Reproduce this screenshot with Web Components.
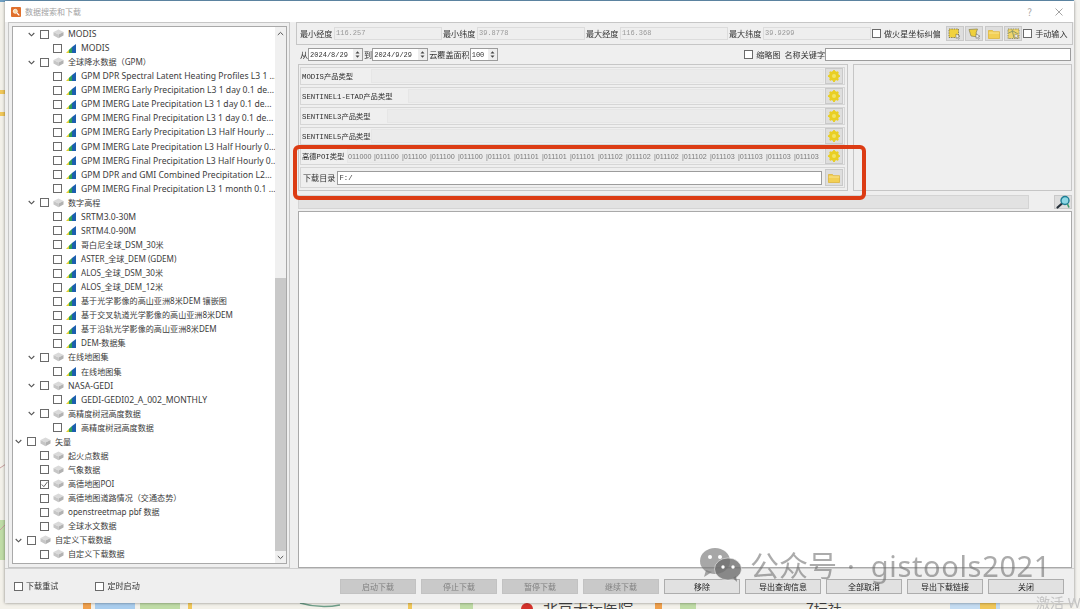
<!DOCTYPE html>
<html lang="zh">
<head>
<meta charset="utf-8">
<title>数据搜索和下载</title>
<style>
    html, body { margin: 0; padding: 0; width: 1080px; height: 609px; overflow: hidden; background: #f1f0ea; }
    body { font-family: "Noto Sans", "Noto Sans CJK SC", sans-serif; }
</style>
</head>
<body>
<map-backdrop></map-backdrop>
<search-window></search-window>
<annotation-layer></annotation-layer>

<script>
const CUBE = `<svg width="11" height="10" viewBox="0 0 11 10"><path d="M5.5 0.5 10.5 3 5.5 5.5 .5 3Z" fill="#dadada"/><path d="M.5 3v3.5l5 2.8V5.5Z" fill="#c6c6c6"/><path d="M10.5 3v3.5l-5 2.8V5.5Z" fill="#b2b2b2"/></svg>`;
const RASTER = `<svg width="10" height="9" viewBox="0 0 10 9"><path d="M0 9 3 5.800V9Z" fill="#e3cf2e"/><path d="M3 9V5.800L6 3V9Z" fill="#2f9e58"/><path d="M6 9V3L10 0V9Z" fill="#1c5fae"/></svg>`;
const GEAR = `<svg width="14" height="14" viewBox="0 0 14 14"><g fill="#e9cf24"><circle cx="7" cy="7" r="5"/><rect x="6" y="1" width="2" height="12" rx=".6"/><rect x="6" y="1" width="2" height="12" rx=".6" transform="rotate(45 7 7)"/><rect x="6" y="1" width="2" height="12" rx=".6" transform="rotate(90 7 7)"/><rect x="6" y="1" width="2" height="12" rx=".6" transform="rotate(135 7 7)"/></g><circle cx="7" cy="7" r="2" fill="#f3e462"/></svg>`;
const FOLDER = `<svg width="12" height="10" viewBox="0 0 12 10"><path d="M.5 1.500h4l1 1.200h6V9.500H.5Z" fill="#f2cf55" stroke="#dcb02e" stroke-width=".7"/><path d="M.8 4h10.400" stroke="#f9e591" stroke-width="1"/></svg>`;
const SEARCH = `<svg width="15" height="14" viewBox="0 0 15 14"><path d="M6 8.500 1.500 12.500" stroke="#26303a" stroke-width="2.200" stroke-linecap="round"/><circle cx="9" cy="5.500" r="4" fill="#8fd8e4" stroke="#1f7f96" stroke-width="1.400"/><path d="M11.500 9 13 12.500" stroke="#3b9c6a" stroke-width="1.600"/></svg>`;
const SELECT_BOX = `<svg width="13" height="12" viewBox="0 0 13 12"><rect x="1" y="1" width="9.500" height="8.500" fill="#f1d23f" stroke="#6e6a4a" stroke-width=".8" stroke-dasharray="1.400 1"/><path d="M8 6l4 2.200-1.700.6 1 1.800-1 .6-1-1.800-1.200 1Z" fill="#fff" stroke="#555" stroke-width=".5"/></svg>`;
const SELECT_POLY = `<svg width="13" height="12" viewBox="0 0 13 12"><path d="M1 1.500 9.500 1 8 5 10 9 3 8Z" fill="#efd03c" stroke="#8a8350" stroke-width=".7"/><path d="M8 6l4 2.200-1.700.6 1 1.800-1 .6-1-1.800-1.200 1Z" fill="#fff" stroke="#555" stroke-width=".5"/></svg>`;
const SELECT_MAP = `<svg width="13" height="12" viewBox="0 0 13 12"><rect x="1" y="1" width="11" height="9.500" fill="#efd56a" stroke="#7a7a5a" stroke-width=".8" stroke-dasharray="1.400 1"/><path d="M1.500 5 6 3l5 3M5 1.500 7 10" stroke="#8d9b6b" stroke-width="1" fill="none"/><path d="M8 6l3.600 2-1.500.5.9 1.600-.9.5-.9-1.600-1.100.9Z" fill="#fff" stroke="#555" stroke-width=".4"/></svg>`;

class MapBackdrop extends HTMLElement {
    constructor() {
        super();
        this.attachShadow({ mode: 'open' });
        this.shadowRoot.innerHTML = `
            <style>
                :host { position: absolute; inset: 0; display: block; }
                svg { display: block; }
                text { font-family: "Noto Sans CJK SC", sans-serif; }
            </style>
            <svg width="1080" height="609" viewBox="0 0 1080 609">
                <rect width="1080" height="609" fill="#f3f1ea"/>
                <rect width="1080" height="2" fill="#6f9fc2"/>
                <rect x="0" y="90" width="6" height="4" fill="#f0c75a"/>
                <rect x="0" y="112" width="6" height="4" fill="#f0c75a"/>
                <rect x="0" y="520" width="6" height="40" fill="#bfdca6"/>
                <path d="M0 468 6 464M0 530 6 524" stroke="#c9a0a0" stroke-width="1"/>
                <rect x="1074" y="0" width="6" height="609" fill="#f4f3ef"/>
                <rect x="83" y="603" width="8" height="6" fill="#f0a04c"/>
                <rect x="95" y="603" width="40" height="6" fill="#a9cdee"/>
                <rect x="140" y="603" width="40" height="6" fill="#bfdca6"/>
                <rect x="188" y="603" width="4" height="6" fill="#f0c75a"/>
                <path d="M300 603q20 6 40 2" stroke="#6f9f8a" stroke-width="1.500" fill="none"/>
                <rect x="408" y="603" width="4" height="6" fill="#f0c75a"/>
                <rect x="460" y="603" width="13" height="6" fill="#bfdca6"/>
                <circle cx="527" cy="609" r="6" fill="#d4322c"/>
                <text x="543" y="614" font-size="15" fill="#444">北京天坛医院</text>
                <rect x="655" y="603" width="7" height="6" fill="#f0a04c"/>
                <rect x="680" y="603" width="16" height="6" fill="#bfdca6"/>
                <text x="806" y="614" font-size="14" fill="#444">7坛社</text>
                <rect x="950" y="603" width="50" height="6" fill="#c4dcf2"/>
                <rect x="980" y="603" width="16" height="6" fill="#f0c75a"/>
            </svg>
        `;
    }
}

class CheckBox extends HTMLElement {
    constructor() {
        super();
        this.attachShadow({ mode: 'open' });
        this.shadowRoot.innerHTML = `
            <style>
                :host { display: inline-flex; align-items: center; gap: 3px; color: #333; font: 8.100px/12px "Noto Sans CJK SC", sans-serif; white-space: nowrap; }
                .box { width: 7px; height: 7px; border: 1px solid #6a6a6a; background: #fff; display: block; flex: none; }
                svg { display: block; }
            </style>
            <span class="box">${this.hasAttribute('checked') ? '<svg width="7" height="7" viewBox="0 0 7 7"><path d="M.8 3.500l2 2.200L6.500.8" stroke="#666" stroke-width="1" fill="none"/></svg>' : ''}</span><slot></slot>
        `;
    }
}

class PushButton extends HTMLElement {
    constructor() {
        super();
        this.attachShadow({ mode: 'open' });
        this.shadowRoot.innerHTML = `
            <style>
                :host { display: flex; align-items: center; justify-content: center; height: 13px; background: #e1e1e1; border: 1px solid #adadad; color: #222; font: 8px "Noto Sans CJK SC", sans-serif; }
                :host([disabled]) { background: #c9c9c9; border-color: #c2c2c2; color: #808080; }
            </style>
            <slot></slot>
        `;
    }
}

class ToolButton extends HTMLElement {
    constructor() {
        super();
        this.attachShadow({ mode: 'open' });
        const icons = { gear: GEAR, folder: FOLDER, search: SEARCH, box: SELECT_BOX, poly: SELECT_POLY, map: SELECT_MAP };
        this.shadowRoot.innerHTML = `
            <style>
                :host { display: flex; align-items: center; justify-content: center; width: 16px; height: 15px; flex: none; background: #dedede; border: 1px solid #c9c9c9; }
                svg { display: block; }
            </style>
            ${icons[this.getAttribute('icon')] || ''}
        `;
    }
}

class TreeView extends HTMLElement {
    constructor() {
        super();
        this.attachShadow({ mode: 'open' });
    }

    connectedCallback() {
        this.render();
    }

    get rows() {
        const r = (t) => [2, t, 'raster'];
        return [
            [1, 'MODIS', 'cube', true], r('MODIS'),
            [1, '全球降水数据（GPM）', 'cube', true],
            r('GPM DPR Spectral Latent Heating Profiles L3 1 ...'),
            r('GPM IMERG Early Precipitation L3 1 day 0.1 de...'),
            r('GPM IMERG Late Precipitation L3 1 day 0.1 de...'),
            r('GPM IMERG Final Precipitation L3 1 day 0.1 de...'),
            r('GPM IMERG Early Precipitation L3 Half Hourly ...'),
            r('GPM IMERG Late Precipitation L3 Half Hourly 0...'),
            r('GPM IMERG Final Precipitation L3 Half Hourly 0...'),
            r('GPM DPR and GMI Combined Precipitation L2...'),
            r('GPM IMERG Final Precipitation L3 1 month 0.1 ...'),
            [1, '数字高程', 'cube', true],
            r('SRTM3.0-30M'), r('SRTM4.0-90M'), r('哥白尼全球_DSM_30米'),
            r('ASTER_全球_DEM (GDEM)'), r('ALOS_全球_DSM_30米'), r('ALOS_全球_DEM_12米'),
            r('基于光学影像的高山亚洲8米DEM 镶嵌图'),
            r('基于交叉轨道光学影像的高山亚洲8米DEM'),
            r('基于沿轨光学影像的高山亚洲8米DEM'),
            r('DEM-数据集'),
            [1, '在线地图集', 'cube', true], r('在线地图集'),
            [1, 'NASA-GEDI', 'cube', true], r('GEDI-GEDI02_A_002_MONTHLY'),
            [1, '高精度树冠高度数据', 'cube', true], r('高精度树冠高度数据'),
            [0, '矢量', 'cube', true],
            [1, '起火点数据', 'cube'], [1, '气象数据', 'cube'],
            [1, '高德地图POI', 'cube', false, true],
            [1, '高德地图道路情况（交通态势）', 'cube'],
            [1, 'openstreetmap pbf 数据', 'cube'],
            [1, '全球水文数据', 'cube'],
            [0, '自定义下载数据', 'cube', true],
            [1, '自定义下载数据', 'cube'],
        ];
    }

    render() {
        this.shadowRoot.innerHTML = `
            <style>
                :host { display: flex; height: 100%; background: #fff; border: 1px solid #a9a9a9; box-sizing: border-box; overflow: hidden; }
                .list { flex: 1; min-width: 0; }
                .row { height: 14.070px; display: flex; align-items: center; color: #3c3c3c; font: 8.600px/14px "Noto Sans", "Noto Sans CJK SC", sans-serif; white-space: nowrap; }
                .row.cjk { font-size: 8.100px; }
                .chev { width: 12px; padding-left: 1px; flex: none; display: flex; }
                .row check-box { margin-right: 4px; }
                .ico { width: 10px; margin-right: 5px; flex: none; display: flex; align-items: center; justify-content: center; }
                svg { display: block; flex: none; }
                .bar { width: 11px; flex: none; display: flex; flex-direction: column; align-items: center; background: #f0f0f0; }
                .arrow { height: 12px; display: flex; align-items: center; }
                .gap { height: 239px; }
                .thumb { flex: 1; width: 100%; background: #c9c9c9; }
            </style>
            <div class="list">
                ${this.rows.map(([lvl, text, icon, open, checked]) => `
                    <div class="row ${/[\u4e00-\u9fff]/.test(text) ? 'cjk' : ''}" style="padding-left:${1 + 13 * lvl}px">
                        <span class="chev">${open ? '<svg width="7" height="5" viewBox="0 0 7 5"><path d="M.7 1l2.800 2.800L6.300 1" stroke="#555" stroke-width="1.100" fill="none"/></svg>' : ''}</span>
                        <check-box ${checked ? 'checked' : ''}></check-box>
                        <span class="ico">${icon === 'raster' ? RASTER : CUBE}</span>
                        <span>${text}</span>
                    </div>
                `).join('')}
            </div>
            <div class="bar">
                <div class="arrow"><svg width="7" height="5" viewBox="0 0 7 5"><path d="M.8 4l2.700-2.600L6.200 4" stroke="#555" stroke-width="1" fill="none"/></svg></div>
                <div class="gap"></div>
                <div class="thumb"></div>
                <div class="arrow"><svg width="7" height="5" viewBox="0 0 7 5"><path d="M.8 1l2.700 2.600L6.200 1" stroke="#555" stroke-width="1" fill="none"/></svg></div>
            </div>
        `;
    }
}

class ProductRow extends HTMLElement {
    constructor() {
        super();
        this.attachShadow({ mode: 'open' });
        const lead = this.getAttribute('lead') || '0';
        this.shadowRoot.innerHTML = `
            <style>
                :host { display: flex; align-items: center; height: 18px; padding: 0 1px; border: 1px solid #d6d6d6; box-sizing: border-box; font: 7.300px "Liberation Mono", "Noto Sans CJK SC", monospace; color: #2c2c2c; }
                .name { width: ${lead}px; flex: none; white-space: nowrap; }
                .val { flex: 1; height: 14px; min-width: 0; background: #ebebeb; border: 1px solid #e6e6e6; box-sizing: border-box; display: flex; align-items: center; overflow: hidden; white-space: nowrap; }
                tool-button { margin-left: 1px; height: 14px; }
            </style>
            <span class="name"><slot></slot></span>
            <span class="val"><slot name="values"></slot></span>
            <tool-button icon="gear"></tool-button>
        `;
    }
}

class SearchPanel extends HTMLElement {
    constructor() {
        super();
        this.attachShadow({ mode: 'open' });
        const ranges = [['最小经度', '116.257'], ['最小纬度', '39.8778'], ['最大经度', '116.368'], ['最大纬度', '39.9299']];
        const poi = ['011000', '011100', '011100', '011100', '011100', '011101', '011101', '011101', '011101', '011102', '011102', '011102', '011102', '011103', '011103', '011103', '011103'];
        const spin = `<span class="spin"><svg width="7" height="9" viewBox="0 0 7 9"><path d="M1.500 3.500h4L3.500 1.200ZM1.500 5.500h4L3.500 7.800Z" fill="#444"/></svg></span>`;
        this.shadowRoot.innerHTML = `
            <style>
                :host { display: flex; flex-direction: column; width: 777px; height: 546px; flex: none; font: 8.100px "Liberation Mono", "Noto Sans CJK SC", monospace; color: #333; }
                .coords { height: 23px; box-sizing: border-box; display: flex; align-items: center; padding-left: 3px; border: 1px solid #c6c6c6; flex: none; }
                .coords .lab { flex: none; width: 34px; white-space: nowrap; }
                .coords .num { width: 108px; height: 13px; margin-right: 1px; flex: none; box-sizing: border-box; border: 1px solid #dcdcdc; background: #eee; color: #999; font: 7px/11px "Liberation Mono", monospace; padding-left: 1px; }
                .tools { display: flex; gap: 1.500px; margin: 0 1px 0 5px; }
                .tools tool-button { height: 13px; }
                .dates { height: 19px; display: flex; align-items: center; padding-left: 4px; flex: none; }
                .spinbox { height: 13px; flex: none; box-sizing: border-box; border: 1px solid #9c9c9c; background: #fff; display: flex; align-items: center; justify-content: space-between; font: 7px "Liberation Mono", monospace; padding-left: 1px; }
                .spin { width: 9px; height: 11px; background: #eee; display: flex; align-items: center; justify-content: center; flex: none; }
                svg { display: block; }
                .grow { flex: 1; }
                .key { width: 246px; height: 13px; box-sizing: border-box; border: 1px solid #9c9c9c; background: #fff; flex: none; margin-right: 2px; }
                .middle { height: 127px; flex: none; display: flex; gap: 5px; padding-left: 2px; }
                .products { width: 550px; box-sizing: border-box; padding: 2px 2px 2px 1px; border: 1px solid #c6c6c6; display: flex; flex-direction: column; gap: 2px; }
                .side { flex: 1; margin-right: 1px; border: 1px solid #c6c6c6; background: #efefef; }
                product-row { flex: none; }
                .dir { height: 21px; box-sizing: border-box; border: 1px solid #d6d6d6; display: flex; align-items: center; padding: 0 1px 0 2px; font-family: "Noto Sans CJK SC", sans-serif; flex: none; }
                .dir .input { flex: 1; height: 14px; margin: 0 3px 0 2px; box-sizing: border-box; border: 1px solid #9c9c9c; background: #fff; font: 7.300px/12px "Liberation Mono", monospace; padding-left: 1px; }
                .poi { display: inline-block; width: 28px; font: 7.200px "Liberation Sans", sans-serif; color: #7a7a7a; }
                .poi:first-child { width: 26px; }
                .search { height: 17px; flex: none; display: flex; align-items: center; padding: 2px 0 0 2px; }
                .search .fill { width: 731px; height: 14px; background: #e2e2e2; border: 1px solid #d4d4d4; box-sizing: border-box; }
                .search tool-button { margin-left: 25px; height: 12px; }
                .results { flex: 1; margin: 1px 1px 0 2px; background: #fff; border: 1px solid #a9a9a9; }
            </style>
            <div class="coords">
                ${ranges.map(([l, v]) => `<span class="lab">${l}</span><span class="num">${v}</span>`).join('')}
                <check-box>做火星坐标纠偏</check-box>
                <div class="tools">
                    <tool-button icon="box"></tool-button><tool-button icon="poly"></tool-button><tool-button icon="folder"></tool-button><tool-button icon="map"></tool-button>
                </div>
                <check-box>手动输入</check-box>
            </div>
            <div class="dates">
                <span>从</span><span class="spinbox" style="width:55px">2024/8/29${spin}</span>
                <span style="margin:0 0 0 1px">到</span><span class="spinbox" style="width:56px">2024/9/29${spin}</span>
                <span style="margin-left:1px">云覆盖面积</span><span class="spinbox" style="width:28px">100${spin}</span>
                <span class="grow"></span>
                <check-box style="margin-right:4px">缩略图</check-box>
                <span>名称关键字</span><span class="key"></span>
            </div>
            <div class="middle">
                <div class="products">
                    <product-row lead="69">MODIS产品类型</product-row>
                    <product-row lead="106">SENTINEL1-ETAD产品类型</product-row>
                    <product-row lead="85">SENTINEL3产品类型</product-row>
                    <product-row lead="69">SENTINEL5产品类型</product-row>
                    <product-row lead="45">高德POI类型
                        <span slot="values">${poi.map((c, i) => `<span class="poi">${i ? '|' : ''}${c}</span>`).join('')}</span>
                    </product-row>
                    <div class="dir">下载目录<span class="input">F:/</span><tool-button icon="folder"></tool-button></div>
                </div>
                <div class="side"></div>
            </div>
            <div class="search"><span class="fill"></span><tool-button icon="search"></tool-button></div>
            <div class="results"></div>
        `;
    }
}

class SearchWindow extends HTMLElement {
    constructor() {
        super();
        this.attachShadow({ mode: 'open' });
        const disabled = ['启动下载', '停止下载', '暂停下载', '继续下载'];
        const enabled = ['移除', '导出查询信息', '全部取消', '导出下载链接', '关闭'];
        this.shadowRoot.innerHTML = `
            <style>
                :host { position: absolute; left: 5px; top: 1px; width: 1069px; height: 602px; display: flex; flex-direction: column; background: #efefef; box-shadow: 0 0 3px rgba(0,0,0,.45); font-family: "Noto Sans CJK SC", sans-serif; filter: blur(.3px); }
                .title { height: 21px; flex: none; background: #fff; display: flex; align-items: center; padding-left: 6px; color: #a2a2a2; font-size: 8px; gap: 4px; }
                .logo { width: 10px; height: 10px; background: #e0702c; border-radius: 1px; display: flex; align-items: center; justify-content: center; }
                .grow { flex: 1; }
                .help { color: #aaa; width: 41px; text-align: center; font-size: 10px; }
                .close { width: 19px; padding-left: 1px; height: 21px; display: flex; align-items: center; }
                svg { display: block; }
                .main { height: 546px; flex: none; display: flex; gap: 6px; padding-left: 3px; }
                .tree { width: 282px; flex: none; box-sizing: border-box; padding: 3px 2px 3px 3px; border: 1px solid #c6c6c6; }
                .foot { flex: 1; display: flex; align-items: center; padding: 0 10px 0 9px; border-top: 1px solid #cfcfcf; }
                .foot check-box:nth-child(2) { margin-left: 37px; }
                .foot .btns { margin-left: auto; display: grid; grid-template-columns: repeat(9, 76px); gap: 5px; }
            </style>
            <div class="title">
                <span class="logo"><svg width="8" height="8" viewBox="0 0 8 8"><circle cx="3.300" cy="3.300" r="2" fill="#f6d9a5" stroke="#fff" stroke-width=".8"/><path d="M5 5l2.300 2.300" stroke="#fff" stroke-width="1.200"/></svg></span>
                <span>数据搜索和下载</span><span class="grow"></span>
                <span class="help">?</span>
                <span class="close"><svg width="8" height="8" viewBox="0 0 8 8"><path d="M.5.5l7 7M7.500.5l-7 7" stroke="#9a9a9a" stroke-width=".9"/></svg></span>
            </div>
            <div class="main">
                <div class="tree"><tree-view></tree-view></div>
                <search-panel></search-panel>
            </div>
            <div class="foot">
                <check-box>下载重试</check-box>
                <check-box>定时启动</check-box>
                <div class="btns">
                    ${disabled.map(t => `<push-button disabled>${t}</push-button>`).join('')}
                    ${enabled.map(t => `<push-button>${t}</push-button>`).join('')}
                </div>
            </div>
        `;
    }
}

class AnnotationLayer extends HTMLElement {
    constructor() {
        super();
        this.attachShadow({ mode: 'open' });
        this.shadowRoot.innerHTML = `
            <style>
                :host { position: absolute; inset: 0; display: block; pointer-events: none; font-family: "Noto Sans", "Noto Sans CJK SC", sans-serif; }
                .mark { position: absolute; left: 293px; top: 145px; width: 565px; height: 47px; border: 4px solid #dc3c14; border-radius: 6px; }
                .wx { position: absolute; left: 699px; top: 547px; }
                .name { position: absolute; left: 750px; top: 546px; height: 40px; line-height: 40px; color: rgba(105,105,105,.56); white-space: nowrap; }
                .name b { font-weight: 400; font-size: 29px; }
                .name i { font-style: normal; font-size: 29px; margin: 0 16px 0 10px; }
                .name span { font-size: 29px; letter-spacing: .65px; }
                .act { position: absolute; left: 1036px; top: 595px; font-size: 14px; line-height: 16px; color: #c4c4c4; white-space: nowrap; }
            </style>
            <div class="mark"></div>
            <svg class="wx" width="44" height="36" viewBox="0 0 44 36">
                <g fill="rgba(120,120,120,.65)">
                    <ellipse cx="16" cy="14" rx="15" ry="13"/><path d="M7 23 5 30l8-5Z"/>
                </g>
                <g fill="rgba(110,110,110,.8)" stroke="#fff" stroke-opacity=".5" stroke-width="1">
                    <ellipse cx="29" cy="22" rx="13.500" ry="11"/>
                </g>
                <path d="M34 31l4 4-1-6Z" fill="rgba(110,110,110,.8)"/>
                <circle cx="11" cy="10" r="2" fill="#fff"/><circle cx="21" cy="10" r="2" fill="#fff"/>
                <circle cx="24" cy="20" r="1.700" fill="#fff"/><circle cx="34" cy="20" r="1.700" fill="#fff"/>
            </svg>
            <div class="name"><b>公众号</b><i>·</i><span>gistools2021</span></div>
            <div class="act">激活 W</div>
        `;
    }
}

customElements.define('map-backdrop', MapBackdrop);
customElements.define('check-box', CheckBox);
customElements.define('push-button', PushButton);
customElements.define('tool-button', ToolButton);
customElements.define('tree-view', TreeView);
customElements.define('product-row', ProductRow);
customElements.define('search-panel', SearchPanel);
customElements.define('search-window', SearchWindow);
customElements.define('annotation-layer', AnnotationLayer);
</script>
</body>
</html>
